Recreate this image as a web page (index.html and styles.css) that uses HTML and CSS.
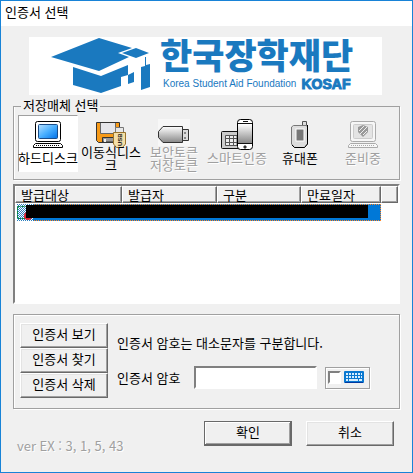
FILE: index.html
```html
<!DOCTYPE html>
<html lang="ko">
<head>
    <meta charset="UTF-8">
    <meta name="viewport" content="width=device-width, initial-scale=1.0">
    <title>인증서 선택</title>
    <link rel="stylesheet" href="styles.css">
</head>
<body>
    <div class="dialog">
        <h1 class="titlebar">인증서 선택</h1>
        <form class="content">
            <div class="banner">
                <svg class="banner-cap" width="100" height="56" viewBox="0 0 100 56" fill="#1a79bf">
                    <path d="M0 19L48 0L81 10L67 15L78 19L48 33Z"/>
                    <path d="M71 15L85 10L98 15L85 20Z"/>
                    <path d="M22 29L50 38L77 27V37L70 39V48L50 55L22 47Z"/>
                    <path d="M77 37L83 34V44L77 46Z"/>
                    <path d="M90 29L94 28V19H95V27L99 26V49L90 52Z"/>
                </svg>
                <div class="banner-text">
                    <div class="banner-name">한국장학재단</div>
                    <div class="banner-sub">
                        <span>Korea Student Aid Foundation</span>
                        <b>KOSAF</b>
                    </div>
                </div>
            </div>

            <fieldset class="media">
                <legend>저장매체 선택</legend>
                <button type="button" class="media-item selected">
                    <span class="media-icon">
                        <svg width="32" height="28" viewBox="0 0 32 28">
                            <defs>
                                <linearGradient id="screen" x2="1" y2="1">
                                    <stop offset="0" stop-color="#b8e0ff"/>
                                    <stop offset=".5" stop-color="#4ab0ff"/>
                                    <stop offset="1" stop-color="#0070e8"/>
                                </linearGradient>
                            </defs>
                            <rect x="3.500" y=".5" width="25" height="20" rx="2" fill="#fff" stroke="#000"/>
                            <rect x="6.500" y="3.500" width="19" height="14" rx="1" fill="url(#screen)" stroke="#1a4c88"/>
                            <path d="M3.500 22.500H28.500L30.500 24.500V26.500H1.500V24.500Z" fill="#fff" stroke="#000"/>
                            <path d="M4 24.500H28" stroke="#000" stroke-dasharray="1 1"/>
                        </svg>
                    </span>
                    <span class="media-label">하드디스크</span>
                </button>
                <button type="button" class="media-item">
                    <span class="media-icon">
                        <svg width="32" height="28" viewBox="0 0 32 28">
                            <path d="M1.500 1.500H24.500V21.500H3.500L1.500 19.500Z" fill="#f79a18" stroke="#333"/>
                            <path d="M5.500 2V12.500H20.500V2" fill="#e6e6ea" stroke="#666"/>
                            <path d="M7.500 21V16.500H19V21Z" fill="#999" stroke="#333"/>
                            <path d="M10 18V21" stroke="#eee" stroke-width="2"/>
                            <path d="M20.500 12V6.500H28.500V12" fill="#e8e8e8" stroke="#777"/>
                            <path d="M18.500 11.500H30.500V23L27.500 26.500H21.500L18.500 23Z" fill="#f4dfa8" stroke="#9a742b"/>
                            <text transform="translate(27 25) rotate(-90)" class="usb">USB</text>
                        </svg>
                    </span>
                    <span class="media-label">이동식디스크</span>
                </button>
                <button type="button" class="media-item" disabled>
                    <span class="media-icon token">
                        <svg width="32" height="28" viewBox="0 0 32 28">
                            <defs>
                                <linearGradient id="metal" x2="0" y2="1">
                                    <stop offset="0" stop-color="#fff"/>
                                    <stop offset="1" stop-color="#888"/>
                                </linearGradient>
                            </defs>
                            <rect width="32" height="27" fill="#f7f7f7"/>
                            <path d="M5 7.500H24.500V23.500H5L.5 18.500V12.500Z" fill="url(#metal)" stroke="#333"/>
                            <path d="M24.500 10.500H30.500V21.500H24.500Z" fill="#ddd" stroke="#333"/>
                            <path d="M27 13V15M27 18V20" stroke="#333"/>
                        </svg>
                    </span>
                    <span class="media-label">보안토큰<br>저장토큰</span>
                </button>
                <button type="button" class="media-item" disabled>
                    <span class="media-icon">
                        <svg width="34" height="32" viewBox="0 0 34 32">
                            <rect x="1.500" y="12.500" width="20" height="17" rx="1" fill="#ccc" stroke="#111"/>
                            <path d="M5.500 16.500H17V26.500H5.500ZM5 19.500H17M5 23.500H17M9.500 16V27M13.500 16V27" fill="#eee" stroke="#555"/>
                            <rect x="17.500" y=".5" width="15" height="30" rx="3" fill="#fff" stroke="#000"/>
                            <rect x="18" y="5" width="14" height="19" fill="url(#metal)"/>
                            <path d="M18 4.500H32M18 24.500H32M23 2.500H28" stroke="#111"/>
                            <path d="M25 26L27 28L25 30L23 28Z" fill="#333"/>
                        </svg>
                    </span>
                    <span class="media-label">스마트인증</span>
                </button>
                <button type="button" class="media-item">
                    <span class="media-icon">
                        <svg width="20" height="28" viewBox="0 0 20 28">
                            <path d="M12.500 5V.5H16.500V5" fill="#ddd" stroke="#555"/>
                            <path d="M3.500 4.500H16.500L17.500 6V23L14.500 26.500H4.500L1.500 23V6Z" fill="#ddd" stroke="#777"/>
                            <path d="M17.500 4V23L14.500 26.500H4.500L2 24" fill="none" stroke="#000"/>
                            <rect x="6" y="8" width="8" height="12" fill="#777" stroke="#fff"/>
                        </svg>
                    </span>
                    <span class="media-label">휴대폰</span>
                </button>
                <button type="button" class="media-item" disabled>
                    <span class="media-icon">
                        <svg width="32" height="28" viewBox="0 0 32 28">
                            <g fill="#f7f7f7" stroke="#aaa">
                                <rect x="3.500" y=".5" width="25" height="20" rx="2"/>
                                <rect x="6.500" y="3.500" width="19" height="14" rx="1" fill="#e4e4e4" stroke="#ccc"/>
                                <path d="M3.500 22.500H28.500L30.500 24.500V26.500H1.500V24.500Z"/>
                                <path d="M4 24.500H28" stroke-dasharray="1 1"/>
                            </g>
                            <path d="M11 6L16 4L21 6V11L16 16L11 11Z" fill="#999"/>
                            <path d="M12 10L17 5M13 13L20 6M16 14L20 10" stroke="#eee"/>
                        </svg>
                    </span>
                    <span class="media-label">준비중</span>
                </button>
            </fieldset>

            <div class="list">
                <table>
                    <colgroup>
                        <col class="col-subject">
                        <col class="col-issuer">
                        <col class="col-type">
                        <col class="col-expire">
                        <col>
                    </colgroup>
                    <thead>
                        <tr>
                            <th>발급대상</th>
                            <th>발급자</th>
                            <th>구분</th>
                            <th>만료일자</th>
                            <th></th>
                        </tr>
                    </thead>
                    <tbody>
                        <tr>
                            <td colspan="4">
                                <div class="cert">
                                    <svg class="cert-icon" width="16" height="17" viewBox="0 0 16 17">
                                        <defs>
                                            <pattern id="dots" width="2" height="2" patternUnits="userSpaceOnUse">
                                                <path d="M0 0H1V1H0ZM1 1H2V2H1Z" fill="#2a80c0"/>
                                            </pattern>
                                        </defs>
                                        <rect width="16" height="17" fill="#fff"/>
                                        <rect width="16" height="17" fill="url(#dots)"/>
                                        <path d="M.5 2.500H15M.5 3V14M1 14.500H8" fill="none" stroke="#0a8a40" stroke-dasharray="3 1"/>
                                        <circle cx="11" cy="12" r="3" fill="none" stroke="#e02030" stroke-width="2"/>
                                    </svg>
                                    <span class="mask"></span>
                                </div>
                            </td>
                            <td></td>
                        </tr>
                    </tbody>
                </table>
            </div>

            <div class="panel">
                <div class="manage">
                    <button type="button" class="btn">인증서 보기</button>
                    <button type="button" class="btn">인증서 찾기</button>
                    <button type="button" class="btn">인증서 삭제</button>
                </div>
                <div class="password">
                    <p>인증서 암호는 대소문자를 구분합니다.</p>
                    <div class="password-row">
                        <label for="password">인증서 암호</label>
                        <input type="password" id="password" name="password">
                        <label class="keyboard">
                            <input type="checkbox" name="keyboard" aria-label="가상 키보드">
                            <svg width="20" height="12" viewBox="0 0 20 12">
                                <rect width="20" height="12" rx="1" fill="#0a78d0"/>
                                <path d="M2 3H18M2 6H18" stroke="#d8efff" stroke-width="2" stroke-dasharray="2 1"/>
                                <path d="M2 9H4M5 9H14M15 9H18" stroke="#d8efff" stroke-width="2"/>
                                <path d="M1 11.500H19" stroke="#0038a0"/>
                            </svg>
                        </label>
                    </div>
                </div>
            </div>

            <div class="footer">
                <span class="version">ver EX : 3, 1, 5, 43</span>
                <button type="submit" class="btn default">확인</button>
                <button type="button" class="btn">취소</button>
            </div>
        </form>
    </div>
</body>
</html>
```

FILE: styles.css
```css
* { margin: 0; padding: 0; box-sizing: border-box; }
body {
    font-family: "Noto Sans CJK KR", sans-serif;
    font-size: 13px;
    line-height: 16px;
    color: #000;
}
button, input {
    font: inherit;
    color: inherit;
}
svg {
    display: block;
    flex: none;
}
.dialog {
    min-height: 100vh;
    border: 1px solid #1883d7;
    background: #f0f0f0;
}
.titlebar {
    height: 25px;
    padding: 3px 4px;
    background: #fff;
    font-size: 13px;
    font-weight: normal;
}
.content {
    padding: 11px 12px 12px;
}

/* logo banner */
.banner {
    display: flex;
    height: 58px;
    margin: 0 18px 0 16px;
    padding: 1px 0 0 22px;
    background: #fff;
    color: #1a79bf;
}
.banner-text {
    margin-left: 9px;
    white-space: nowrap;
}
.banner-name {
    font-size: 35px;
    font-weight: 900;
    line-height: 32px;
}
.banner-sub {
    display: flex;
    align-items: center;
    gap: 5px;
    padding: 6px 0 0 3px;
    font-family: "Liberation Sans", sans-serif;
    font-size: 10px;
    line-height: 16px;
}
.banner-sub b {
    font-size: 14px;
    -webkit-text-stroke: 1px #1a79bf;
}

/* storage media */
.media {
    display: flex;
    gap: 3px;
    height: 83px;
    margin-top: 2px;
    padding: 0 4px 6px;
    border: 1px solid #a0a0a0;
    box-shadow: 1px 1px 0 #fff, inset 1px 0 0 #fff;
}
.media legend {
    margin-left: 3px;
    padding: 0 2px 2px;
}
.media-item {
    width: 60px;
    height: 57px;
    padding: 4px 0 0;
    border: 1px solid transparent;
    background: none;
    line-height: 13px;
}
.media-item.selected {
    border-color: #a0a0a0 #fff #fff #a0a0a0;
    background: #fff;
}
.media-item:disabled {
    color: #a0a0a0;
    text-shadow: 1px 1px 0 #fff;
}
.media-icon {
    display: flex;
    align-items: center;
    justify-content: center;
    height: 28px;
}
.media-icon.token {
    align-items: flex-start;
    height: 30px;
    margin-top: -2px;
}
.media-label {
    display: flex;
    align-items: center;
    justify-content: center;
    height: 26px;
    margin: -4px -1px 0;
    word-break: break-all;
}
.usb {
    font: bold 6px "Liberation Sans", sans-serif;
    fill: #222;
}

/* certificate list */
.list {
    height: 120px;
    margin-top: 4px;
    border: 2px solid;
    border-color: #808080 #fff #fff #808080;
    background: #fff;
}
.list table {
    width: 100%;
    table-layout: fixed;
    border-collapse: separate;
    border-spacing: 0;
}
.col-subject { width: 107px; }
.col-issuer { width: 95px; }
.col-type { width: 84px; }
.col-expire { width: 80px; }
.list th {
    height: 17px;
    padding: 0 0 0 5px;
    border: 1px solid;
    border-color: #fff #696969 #696969 #fff;
    box-shadow: inset -1px -1px 0 #a0a0a0;
    background: #f0f0f0;
    font-weight: normal;
    line-height: 14px;
    text-align: left;
}
.list td {
    padding: 1px 0 0 2px;
}
.cert {
    display: flex;
    height: 17px;
    border: 1px dotted #ff8728;
    background: #0078d7;
}
.cert-icon {
    margin: -1px 0 0 -1px;
}
.mask {
    flex: 1;
    height: 13px;
    margin: 0 12px 0 -7px;
    background: #000;
    z-index: 1;
}

/* password panel */
.panel {
    display: flex;
    gap: 9px;
    margin-top: 10px;
    padding: 8px 6px 10px;
    border: 1px solid #a0a0a0;
    box-shadow: 1px 1px 0 #fff, inset 1px 1px 0 #fff;
}
.manage {
    display: flex;
    flex-direction: column;
}
.btn {
    width: 88px;
    height: 25px;
    padding-bottom: 3px;
    border: 1px solid;
    border-color: #fff #696969 #696969 #fff;
    box-shadow: inset -1px -1px 0 #a0a0a0, inset 1px 1px 0 #e3e3e3;
    background: #f0f0f0;
    line-height: 18px;
}
.btn.default {
    border-color: #696969;
    box-shadow: inset -1px -1px 0 #696969, inset 1px 1px 0 #fff, inset -2px -2px 0 #a0a0a0;
}
.password {
    flex: 1;
    padding-top: 12px;
}
.password-row {
    display: flex;
    align-items: center;
    margin-top: 15px;
}
.password-row input[type="password"] {
    width: 123px;
    height: 23px;
    margin: 0 8px 0 14px;
    padding: 0 3px;
    border: 2px solid;
    border-color: #808080 #fff #fff #808080;
    background: #fff;
}
.keyboard {
    display: flex;
    align-items: center;
    gap: 3px;
    padding: 3px 5px 4px 2px;
    border: 1px solid #a0a0a0;
    box-shadow: inset 1px 1px 0 #fff, 1px 1px 0 #fff;
}
.password-row .keyboard input {
    appearance: none;
    width: 13px;
    height: 13px;
    border: 2px solid;
    border-color: #808080 #fff #fff #808080;
    background: #fff;
}

/* bottom buttons */
.footer {
    display: flex;
    gap: 14px;
    margin-top: 12px;
    padding-right: 6px;
}
.version {
    flex: 1;
    padding: 17px 0 0 4px;
    color: #a0a0a0;
    text-shadow: 1px 1px 0 #fff;
}
```
